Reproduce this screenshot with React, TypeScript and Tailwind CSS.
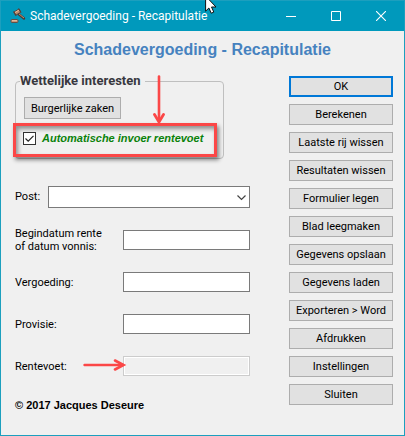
import { useState } from "react";

const actions = [
    "OK",
    "Berekenen",
    "Laatste rij wissen",
    "Resultaten wissen",
    "Formulier legen",
    "Blad leegmaken",
    "Gegevens opslaan",
    "Gegevens laden",
    "Exporteren > Word",
    "Afdrukken",
    "Instellingen",
    "Sluiten",
];

function GavelIcon() {
    return (
        <svg width="16" height="16" viewBox="0 0 16 16" aria-hidden="true">
            <path d="M8.5 6 14 10.5" stroke="#493b36" strokeWidth="2.4" strokeLinecap="round" />
            <path d="M8.5 5.5 14 10" stroke="#c58d6c" strokeWidth="1" />
            <path d="m4 4 5-3 1.8 3.2-5 3Z" fill="#bd8a6b" stroke="#514641" />
            <path d="m5 4.5 4-2.4" stroke="#e9bc9c" />
            <path d="m3.5 3.5 2.5 4.2M8.5 .5 11 4.5" stroke="#554139" strokeWidth="1.2" />
            <rect x="1" y="11.5" width="7" height="3" rx="1" fill="#c89678" stroke="#5f5049" />
            <path d="M2 12.5h5" stroke="#e1b99e" />
        </svg>
    );
}

function TitleBar() {
    return (
        <header className="relative flex h-[30px] items-center bg-[#0099bc] pl-[9px] text-white">
            <GavelIcon />
            <span className="ml-1 font-['Roboto',sans-serif] text-[12px] whitespace-nowrap">
                Schadevergoeding - Recapitulatie
            </span>
            <div className="ml-auto flex h-full">
                <button aria-label="Minimaliseren" className="flex w-[45px] items-center justify-center">
                    <svg width="10" height="10" viewBox="0 0 10 10" stroke="white">
                        <path d="M0 5.5h10" />
                    </svg>
                </button>
                <button aria-label="Maximaliseren" className="flex w-[45px] items-center justify-center">
                    <svg width="10" height="10" viewBox="0 0 10 10" fill="none" stroke="white">
                        <path d="M.5.5h9v9h-9z" />
                    </svg>
                </button>
                <button aria-label="Sluiten" className="flex w-[46px] items-center justify-center">
                    <svg width="10" height="10" viewBox="0 0 10 10" stroke="white" strokeWidth="1.1">
                        <path d="m0 0 10 10M10 0 0 10" />
                    </svg>
                </button>
            </div>
            {/* Mouse pointer */}
            <svg className="absolute -top-px left-[204px]" width="12" height="14" viewBox="0 0 12 14" aria-hidden="true">
                <path d="M.6-4v15.2L3.9 8l2.3 5.2 2.6-1.1L6.5 7H11Z" fill="white" stroke="#111" />
            </svg>
        </header>
    );
}

function InterestGroup() {
    const [auto, setAuto] = useState(true);

    return (
        <fieldset className="relative mr-[26px] h-[87px] min-w-0 rounded-[4px] border border-[#bfbfbf] px-2">
            <legend className="-ml-1 pr-1 font-['Roboto',sans-serif] text-[13px] leading-[18px] font-bold text-[#38383f]">
                Wettelijke interesten
            </legend>
            <button className="mt-[7px] block h-[22px] w-[97px] border border-[#adadad] bg-[#e1e1e1] font-['Roboto',sans-serif] text-[11px] leading-none whitespace-nowrap">
                Burgerlijke zaken
            </button>
            <label className="mt-[11px] -ml-px flex h-[16px] items-center gap-[6px] text-[11px] font-bold whitespace-nowrap text-[#0a820a] italic">
                <span className="relative flex">
                    <input
                        type="checkbox"
                        checked={auto}
                        onChange={(e) => setAuto(e.target.checked)}
                        className="size-[13px] appearance-none border border-[#333] bg-white"
                    />
                    {auto && (
                        <svg className="pointer-events-none absolute inset-0" width="13" height="13" viewBox="0 0 13 13" fill="none" stroke="#222">
                            <path d="m2.5 6.5 2.7 2.7 5.3-5.4" strokeWidth="1.2" />
                        </svg>
                    )}
                </span>
                Automatische invoer rentevoet
            </label>
            {/* Highlight frame */}
            <div className="pointer-events-none absolute top-[33px] right-[6px] -left-[3px] h-[34px] border-[3px] border-[#fb4747] shadow-[2px_3px_4px_rgba(0,0,0,0.45),inset_2px_3px_4px_rgba(0,0,0,0.4)]" />
            <svg className="pointer-events-none absolute -top-[15px] left-[137px]" width="12" height="50" viewBox="0 0 12 50" fill="none" stroke="#fb4747" strokeLinecap="round" aria-hidden="true">
                <path d="M6 1.5V46" strokeWidth="2.6" />
                <path d="m1.5 39.5 4.5 7.5 4.5-7.5" strokeWidth="2.8" />
            </svg>
        </fieldset>
    );
}

function Field({ id, label, disabled }: { id: string; label: string; disabled?: boolean }) {
    return (
        <div className="relative flex h-[42px] items-center justify-between">
            <label htmlFor={id} className="font-['Roboto',sans-serif] text-[11px] leading-[13px] whitespace-pre-line">
                {label}
            </label>
            <input
                id={id}
                disabled={disabled}
                className="h-5 w-[127px] border border-[#7a7a7a] bg-white px-1 text-[11px] disabled:border-[#ccc] disabled:bg-[#f0f0f0] disabled:shadow-[inset_0_0_0_1px_white]"
            />
            {disabled && (
                <svg className="pointer-events-none absolute top-[14px] left-[68px]" width="44" height="12" viewBox="0 0 44 12" fill="none" stroke="#fb4747" strokeLinecap="round" aria-hidden="true">
                    <path d="M1.5 6H40" strokeWidth="2.4" />
                    <path d="m32 1.5 8.5 4.5-8.5 4.5" strokeWidth="2.6" />
                </svg>
            )}
        </div>
    );
}

export default function App() {
    return (
        <div className="flex min-h-screen flex-col border border-[#1c9fbe] bg-[#f0f0f0] font-['Liberation_Sans',Arial,sans-serif] text-black">
            <TitleBar />
            <h1 className="mt-[7px] text-center text-[16px] leading-6 font-bold whitespace-nowrap text-[#4682bf]">
                Schadevergoeding - Recapitulatie
            </h1>
            <main className="flex gap-[39px] pr-[11px] pl-[14px]">
                <form className="min-w-0 flex-1 pt-[10px]" onSubmit={(e) => e.preventDefault()}>
                    <InterestGroup />
                    <div className="mt-[27px] flex items-center justify-between">
                        <label htmlFor="post" className="font-['Roboto',sans-serif] text-[11px]">
                            Post:
                        </label>
                        <div className="relative">
                            <select id="post" className="block h-[22px] w-[202px] appearance-none border border-[#7a7a7a] bg-white px-1 text-[11px]">
                                <option></option>
                            </select>
                            <svg className="pointer-events-none absolute top-[9px] right-[4px]" width="9" height="6" viewBox="0 0 9 6" fill="none" stroke="#444">
                                <path d="m.5.5 4 4 4-4" strokeWidth="1.2" />
                            </svg>
                        </div>
                    </div>
                    <div className="mt-[11px]">
                        <Field id="begin" label={"Begindatum rente\nof datum vonnis:"} />
                        <Field id="vergoeding" label="Vergoeding:" />
                        <Field id="provisie" label="Provisie:" />
                        <Field id="rentevoet" label="Rentevoet:" disabled />
                    </div>
                    <p className="mt-[10px] text-[11px] leading-4 font-bold">© 2017 Jacques Deseure</p>
                </form>
                <div className="flex w-[104px] shrink-0 flex-col gap-[7px] pt-[14px]">
                    {actions.map((name, i) => (
                        <button
                            key={name}
                            className={`h-[21px] bg-[#e1e1e1] font-['Roboto',sans-serif] text-[11px] leading-none whitespace-nowrap ${
                                i === 0 ? "border-2 border-[#0078d7]" : "border border-[#adadad]"
                            }`}
                        >
                            {name}
                        </button>
                    ))}
                </div>
            </main>
        </div>
    );
}
